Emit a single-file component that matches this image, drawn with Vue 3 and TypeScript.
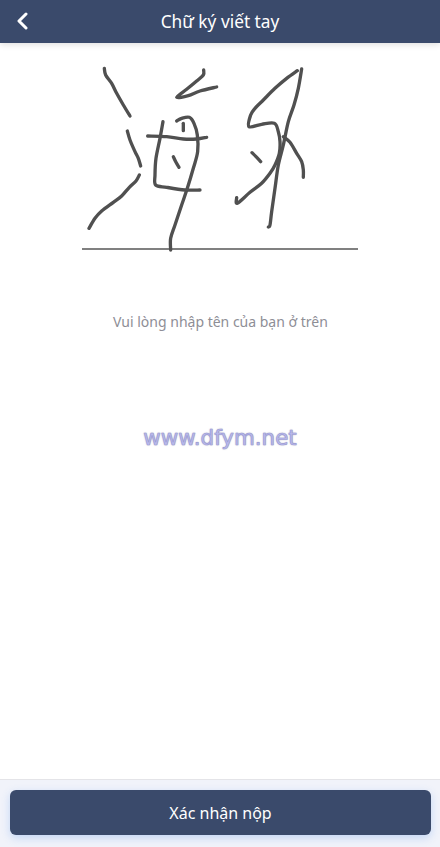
<script setup lang="ts">
const leftStrokes: string[] = [
  '103,40 107,60 125,85 140,115 160,150 180,183',
  '172,228 180,255 195,290 205,310 212,333',
  '208,360 198,378 178,397 155,423 130,442 95,468 75,490 57,520',
  '401,45 400,60 380,78 350,103 320,127 355,122 390,108 440,96',
  '320,198 335,190 358,187 372,205 382,240 383,290 370,340 352,400 335,450 315,510 302,550 302,585',
  '279,200 270,250 258,310 255,360 257,390 290,397 345,405 390,405',
  '233,243 290,245 340,252 380,252 410,247',
  '340,205 340,227',
  '310,305 318,322 327,337'
]

const rightStrokes: string[] = [
  '232,47 200,70 165,100 130,135 105,160 92,180 87,215 125,208 163,205 175,230 180,260 178,295 165,330 150,355 125,385 90,412 52,445 50,428',
  '245,42 235,100 222,150 205,200 190,270 175,330 165,400 155,470 150,510 145,516',
  '190,245 210,262 230,295 245,320 250,345 250,367',
  '96,293 108,305 122,320'
]

// Catmull-Rom through the sampled pen points, so the ink flows like handwriting.
function smooth(raw: string): string {
  const p = raw.split(' ').map((pair) => pair.split(',').map(Number))
  let d = `M${p[0][0]} ${p[0][1]}`
  for (let i = 0; i < p.length - 1; i++) {
    const a = p[Math.max(i - 1, 0)]
    const b = p[i]
    const c = p[i + 1]
    const e = p[Math.min(i + 2, p.length - 1)]
    const c1x = b[0] + (c[0] - a[0]) / 6
    const c1y = b[1] + (c[1] - a[1]) / 6
    const c2x = c[0] - (e[0] - b[0]) / 6
    const c2y = c[1] - (e[1] - b[1]) / 6
    d += ` C${c1x} ${c1y} ${c2x} ${c2y} ${c[0]} ${c[1]}`
  }
  return d
}

const leftPaths = leftStrokes.map(smooth)
const rightPaths = rightStrokes.map(smooth)
</script>

<template>
  <div class="page">
    <header class="header">
      <button class="back" type="button" aria-label="Quay lại">
        <svg width="12" height="18" viewBox="0 0 12 18">
          <path d="M10 2 L3 9 L10 16" fill="none" stroke="#fff" stroke-width="3" stroke-linecap="round" stroke-linejoin="round" />
        </svg>
      </button>
      <h1 class="title">Chữ ký viết tay</h1>
    </header>

    <main class="content">
      <div class="signature">
        <svg class="ink" width="276" height="193" viewBox="0 0 276 193">
          <g transform="translate(-12 0) scale(0.3333)">
            <path v-for="(d, i) in leftPaths" :key="i" :d="d" />
          </g>
          <g transform="translate(138 0) scale(0.3333)">
            <path v-for="(d, i) in rightPaths" :key="i" :d="d" />
          </g>
        </svg>
      </div>
      <p class="hint">Vui lòng nhập tên của bạn ở trên</p>
      <div class="watermark">www.dfym.net</div>
    </main>

    <footer class="footer">
      <button class="submit" type="button">Xác nhận nộp</button>
    </footer>
  </div>
</template>

<style>
html, body {
  margin: 0;
  background: #fff;
}
</style>

<style scoped>
.page {
  width: 440px;
  height: 847px;
  display: flex;
  flex-direction: column;
  overflow: hidden;
  background: #fff;
  font-family: "Noto Sans", "Open Sans", sans-serif;
}
.header {
  position: relative;
  flex: 0 0 43px;
  display: flex;
  align-items: center;
  justify-content: center;
  background: #3a4a6b;
  box-shadow: 0 2px 6px rgba(0, 0, 0, 0.12);
  z-index: 1;
}
.back {
  position: absolute;
  left: 16px;
  top: 12px;
  padding: 0;
  border: 0;
  background: none;
  line-height: 0;
}
.title {
  margin: 0;
  color: #fff;
  font-size: 17.3px;
  font-weight: 400;
  line-height: 22px;
}
.content {
  flex: 1;
  min-height: 0;
  display: flex;
  flex-direction: column;
  align-items: center;
}
.signature {
  width: 276px;
  margin-top: 12px;
  height: 193px;
  border-bottom: 2px solid #808080;
}
.ink {
  display: block;
  overflow: visible;
  filter: blur(0.35px);
}
.ink path {
  fill: none;
  stroke: #505050;
  stroke-width: 10;
  stroke-linecap: round;
  stroke-linejoin: round;
}
.hint {
  margin: 62px 0 0 1px;
  color: #8e8e96;
  font-size: 14px;
  line-height: 20px;
}
.watermark {
  margin-top: 94px;
  color: #b9b9ec;
  font-family: "DejaVu Sans", sans-serif;
  font-size: 21.4px;
  font-weight: 400;
  line-height: 24px;
  -webkit-text-stroke: 0.6px #9c9cd4;
  text-shadow: 0 0 1.5px #8a8aa8;
}
.footer {
  flex: 0 0 68px;
  box-sizing: border-box;
  padding: 10px 9px 12px 10px;
  background: #f1f3fa;
  border-top: 1px solid #e4e4e8;
}
.submit {
  display: block;
  width: 100%;
  height: 45px;
  border: 0;
  border-radius: 6px;
  background: #3a4a6b;
  color: #fff;
  font-family: inherit;
  font-size: 16px;
  box-shadow: 0 3px 8px rgba(90, 150, 240, 0.3);
}
</style>
